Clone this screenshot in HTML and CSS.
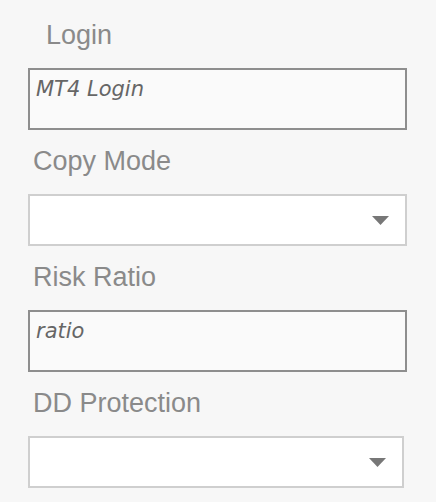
FILE: index.html
```html
<!DOCTYPE html>
<html lang="en">
<head>
<meta charset="utf-8">
<title>Copy settings</title>
<link rel="stylesheet" href="styles.css">
</head>
<body>
<form class="form">
  <div class="field">
    <label class="label label-indent">Login</label>
    <div class="text-box"><span class="placeholder">MT4 Login</span></div>
  </div>
  <div class="field">
    <label class="label">Copy Mode</label>
    <div class="select-box">
      <svg class="arrow" width="17" height="9" viewBox="0 0 17 9"><polygon points="0,0 17,0 8.5,9" fill="#777"/></svg>
    </div>
  </div>
  <div class="field">
    <label class="label">Risk Ratio</label>
    <div class="text-box"><span class="placeholder">ratio</span></div>
  </div>
  <div class="field">
    <label class="label">DD Protection</label>
    <div class="select-box select-narrow">
      <svg class="arrow" width="17" height="9" viewBox="0 0 17 9"><polygon points="0,0 17,0 8.5,9" fill="#777"/></svg>
    </div>
  </div>
</form>
</body>
</html>
```

FILE: styles.css
```css
html, body {
  margin: 0;
  padding: 0;
  background: #f7f7f7;
}

.form {
  display: flex;
  flex-direction: column;
  gap: 16px;
  padding: 20px 0 0 28px;
  width: 379px;
}

.field {
  display: flex;
  flex-direction: column;
  gap: 18px;
}

.label {
  font-family: "Liberation Sans", Arial, sans-serif;
  font-size: 27px;
  line-height: 30px;
  height: 30px;
  color: #8a8a8a;
  padding-left: 5px;
}

.label-indent {
  padding-left: 18px;
}

.text-box {
  box-sizing: border-box;
  height: 62px;
  border: 2px solid #8e8e8e;
  background: #fafafa;
  padding: 7px 6px 0;
}

.placeholder {
  font-family: "DejaVu Sans", sans-serif;
  font-style: italic;
  font-size: 21px;
  line-height: 24px;
  color: #666;
}

.select-box {
  box-sizing: border-box;
  height: 52px;
  border: 2px solid #cfcfcf;
  background: #fff;
  display: flex;
  align-items: center;
  justify-content: flex-end;
  padding-right: 16px;
}

.select-narrow {
  width: 376px;
}

.arrow {
  display: block;
  margin-top: 1px;
}
```
